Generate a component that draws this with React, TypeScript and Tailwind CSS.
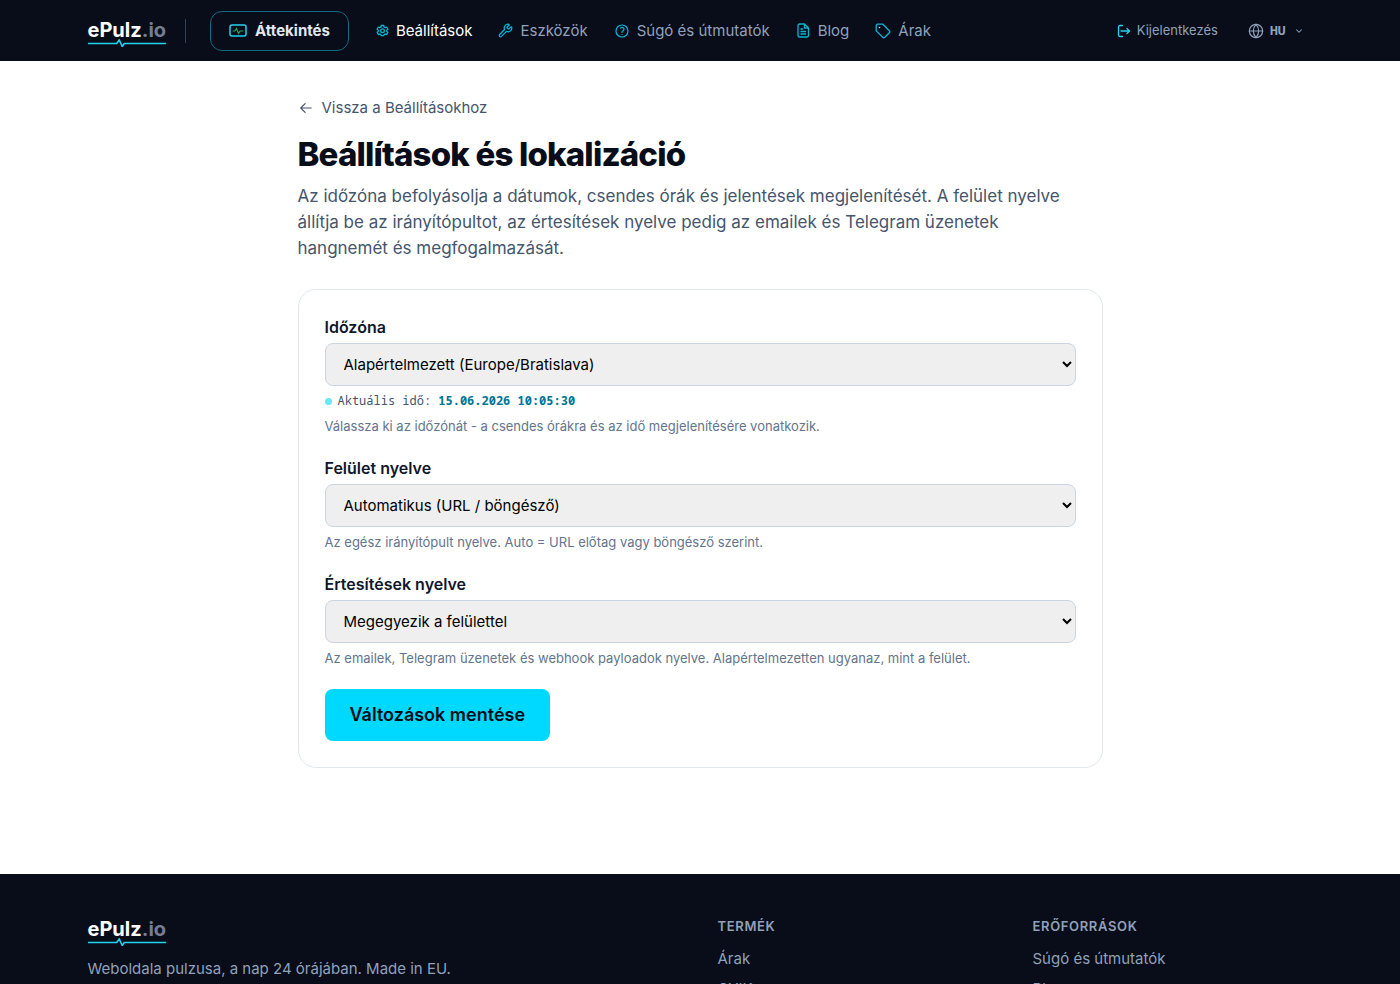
import React, { useState } from 'react';
import {
  HiOutlineArrowLeft,
  HiOutlineQuestionMarkCircle,
} from 'react-icons/hi2';
import { ChevronDown, Globe, Wrench } from 'lucide-react';

const navLinks = [
  { label: 'Beállítások', icon: GearIcon, active: true },
  { label: 'Eszközök', icon: WrenchIcon },
  { label: 'Súgó és útmutatók', icon: HelpIcon },
  { label: 'Blog', icon: DocIcon },
  { label: 'Árak', icon: TagIcon },
];

const footerColumns = [
  { title: 'Termék', links: ['Árak', 'GYIK'] },
  { title: 'Erőforrások', links: ['Súgó és útmutatók', 'Blog'] },
];

export default function App() {
  const [timezone, setTimezone] = useState('default');
  const [uiLang, setUiLang] = useState('auto');
  const [notifyLang, setNotifyLang] = useState('same');

  return (
    <div className="h-screen overflow-x-hidden overflow-y-auto bg-white font-['Inter',sans-serif] text-slate-900 [scrollbar-width:none]">
      {/* Top bar */}
      <header className="bg-[#090d1a]">
        <div className="max-w-[1225px] mx-auto h-[61px] flex items-center">
          <Logo />
          <span className="w-px h-6 bg-slate-700 ml-[19px] mr-6" />
          <a
            href="#attekintes"
            className="h-10 px-[18px] flex items-center gap-2 rounded-xl border border-[#126b7e] text-[15px] leading-6 font-bold text-slate-200"
          >
            <MonitorIcon /> Áttekintés
          </a>
          <nav className="ml-[27px] flex items-center gap-[26px]">
            {navLinks.map(({ label, icon: Icon, active }) => (
              <a
                key={label}
                href="#"
                className={`flex items-center gap-[7px] text-[15px] leading-6 ${active ? 'text-white' : 'text-slate-400'}`}
              >
                <Icon /> {label}
              </a>
            ))}
          </nav>
          <div className="ml-auto mr-[9px] flex items-center gap-[30px] text-slate-400">
            <a href="#kijelentkezes" className="flex items-center gap-[6px] text-[13px]">
              <LogoutIcon /> Kijelentkezés
            </a>
            <button className="flex items-center gap-[6px] font-['Noto_Sans_Mono','DejaVu_Sans_Mono',monospace] text-[13px] font-bold">
              <Globe className="w-4 h-4" strokeWidth={1.8} /> HU
              <ChevronDown className="ml-[2px] w-[10px] h-[10px]" strokeWidth={2.5} />
            </button>
          </div>
        </div>
      </header>

      {/* Settings */}
      <main className="max-w-[805px] mx-auto pt-[35px] pb-[106px]">
        <a href="#beallitasok" className="inline-flex items-center gap-2 text-[15px] leading-6 text-slate-600">
          <HiOutlineArrowLeft className="mx-px w-[14px] h-[14px]" strokeWidth={2} /> Vissza a Beállításokhoz
        </a>
        <h1 className="mt-[14px] text-[33px] leading-[38px] font-extrabold tracking-tight text-[#090d1a]">
          Beállítások és lokalizáció
        </h1>
        <p className="mt-[10px] max-w-[785px] text-[17px] leading-[26px] text-slate-600">
          Az időzóna befolyásolja a dátumok, csendes órák és jelentések megjelenítését. A felület nyelve
          állítja be az irányítópultot, az értesítések nyelve pedig az emailek és Telegram üzenetek
          hangnemét és megfogalmazását.
        </p>

        <form
          className="mt-7 p-[26px] rounded-[18px] border border-slate-200 flex flex-col gap-[21px]"
          onSubmit={(e) => e.preventDefault()}
        >
          <Field id="timezone" label="Időzóna" value={timezone} onChange={setTimezone}
            options={[['default', 'Alapértelmezett (Europe/Bratislava)']]}>
            <div className="mt-[5px] flex items-center gap-[6px] font-['Noto_Sans_Mono','DejaVu_Sans_Mono',monospace] text-xs leading-5 text-slate-600">
              <span className="w-[7px] h-[7px] rounded-full bg-[#67e8f9]" />
              <span>
                Aktuális idő: <strong className="font-bold text-cyan-700">15.06.2026 10:05:30</strong>
              </span>
            </div>
            <Hint>Válassza ki az időzónát - a csendes órákra és az idő megjelenítésére vonatkozik.</Hint>
          </Field>
          <Field id="ui-lang" label="Felület nyelve" value={uiLang} onChange={setUiLang}
            options={[['auto', 'Automatikus (URL / böngésző)']]}>
            <Hint>Az egész irányítópult nyelve. Auto = URL előtag vagy böngésző szerint.</Hint>
          </Field>
          <Field id="notify-lang" label="Értesítések nyelve" value={notifyLang} onChange={setNotifyLang}
            options={[['same', 'Megegyezik a felülettel']]}>
            <Hint>Az emailek, Telegram üzenetek és webhook payloadok nyelve. Alapértelmezetten ugyanaz, mint a felület.</Hint>
          </Field>
          <button type="submit" className="self-start h-[52px] px-[25px] rounded-lg bg-[#00d9ff] text-lg font-semibold text-[#090d1a]">
            Változások mentése
          </button>
        </form>
      </main>

      {/* Footer */}
      <footer className="bg-[#090d1a] text-slate-400">
        <div className="max-w-[1225px] mx-auto pt-[39px] pb-12 grid grid-cols-4 gap-[35px]">
          <div className="col-span-2 flex flex-col items-start">
            <Logo />
            <p className="mt-[11px] text-[15px] leading-6">Weboldala pulzusa, a nap 24 órájában. Made in EU.</p>
          </div>
          {footerColumns.map((col) => (
            <div key={col.title}>
              <h2 className="text-[13px] leading-[26px] font-semibold uppercase tracking-wider">{col.title}</h2>
              <ul className="mt-2 flex flex-col gap-[6px] text-[15px] leading-6">
                {col.links.map((link) => (
                  <li key={link}>
                    <a href="#">{link}</a>
                  </li>
                ))}
              </ul>
            </div>
          ))}
        </div>
      </footer>
    </div>
  );
}

function Logo() {
  return (
    <a href="#" className="pt-1 flex flex-col text-xl leading-6 font-bold text-white">
      <span>
        ePulz<span className="text-[#747d92]">.io</span>
      </span>
      <svg className="-mt-[3px] w-full h-2" viewBox="0 0 78 8" preserveAspectRatio="none" fill="none" stroke="#22d3ee" strokeWidth="1.600">
        <path d="M0 4.500h28.500l2.500-3.500 3 6.500 2-3H78" />
      </svg>
    </a>
  );
}

function Field({ id, label, value, onChange, options, children }: any) {
  return (
    <div>
      <label htmlFor={id} className="block text-base leading-[22px] font-semibold">{label}</label>
      <select
        id={id}
        value={value}
        onChange={(e) => onChange(e.target.value)}
        className="mt-[5px] block w-full h-[43px] px-[14px] rounded-lg border border-slate-300 bg-[#efefef] text-[15px] text-black"
      >
        {options.map(([val, text]: string[]) => (
          <option key={val} value={val}>{text}</option>
        ))}
      </select>
      {children}
    </div>
  );
}

function Hint({ children }: any) {
  return <p className="mt-[5px] text-[13px] leading-5 text-slate-500">{children}</p>;
}

// Icons
function MonitorIcon() {
  return (
    <svg className="w-[18px] h-[14px]" viewBox="0 0 18 14" fill="none" strokeWidth="1.5">
      <rect x="1" y="1" width="16" height="11" rx="2" stroke="#22d3ee" />
      <path d="M3.500 7H6l1.500-2.500L9.500 9.500 11 7h3.500" stroke="#22a55e" strokeWidth="1.200" />
    </svg>
  );
}

function GearIcon() {
  return (
    <svg className="w-[13px] h-[13px]" viewBox="0 0 14 14" fill="none" stroke="#06b6d4" strokeWidth="1.400">
      <path d="M5.700 1.600h2.600l.4 1.600 1.200.7 1.600-.5 1.300 2.200-1.200 1.100v1.300l1.200 1.100-1.300 2.200-1.600-.5-1.200.7-.4 1.100H5.700l-.4-1.100-1.200-.7-1.600.5-1.300-2.200L2.400 8V6.700L1.200 5.600l1.300-2.200 1.600.5 1.200-.7z" />
      <circle cx="7" cy="7.200" r="2" />
    </svg>
  );
}

function WrenchIcon() {
  return <Wrench className="w-[15px] h-[15px] text-cyan-500" strokeWidth={2} />;
}

function HelpIcon() {
  return <HiOutlineQuestionMarkCircle className="w-4 h-4 text-cyan-500" strokeWidth={1.8} />;
}

function DocIcon() {
  return (
    <svg className="w-[15px] h-[15px]" viewBox="0 0 15 15" fill="none" stroke="#06b6d4" strokeWidth="1.300" strokeLinejoin="round">
      <path d="M3.500 1h5l4 4v7.500a1.500 1.500 0 0 1-1.500 1.500H3.500A1.500 1.500 0 0 1 2 12.500v-10A1.500 1.500 0 0 1 3.500 1z" />
      <path d="M8.500 1v4h4M4.500 6H7M4.500 8.500h5.500M4.500 11h5.500" />
    </svg>
  );
}

function TagIcon() {
  return (
    <svg className="w-4 h-4" viewBox="0 0 16 16" fill="none" stroke="#06b6d4" strokeWidth="1.300" strokeLinejoin="round">
      <path d="M1.200 2.700A1.500 1.500 0 0 1 2.700 1.200h4.600c.4 0 .8.200 1.100.5l5.900 6a1.500 1.500 0 0 1 0 2.100l-4.500 4.500a1.500 1.500 0 0 1-2.100 0l-6-5.900a1.500 1.500 0 0 1-.5-1.100z" />
      <circle cx="4.500" cy="4.500" r=".8" fill="#a5f3fc" stroke="none" />
    </svg>
  );
}

function LogoutIcon() {
  return (
    <svg className="w-[14px] h-[14px]" viewBox="0 0 14 14" fill="none" stroke="#22d3ee" strokeWidth="1.300" strokeLinecap="round" strokeLinejoin="round">
      <path d="M5.500 1.500H3A1.500 1.500 0 0 0 1.500 3v8A1.500 1.500 0 0 0 3 12.500h2.500M4 7h8.500M10 4.500 12.500 7 10 9.500" />
    </svg>
  );
}
